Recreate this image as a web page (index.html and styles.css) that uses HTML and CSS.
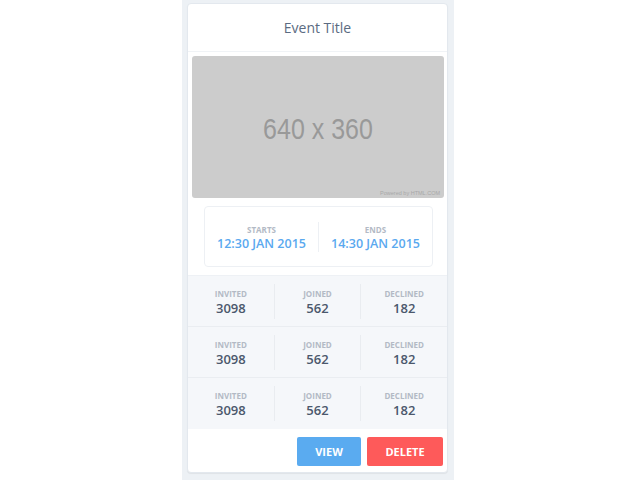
FILE: index.html
```html
<!DOCTYPE html>
<html>
<head>
<meta charset="utf-8">
<link rel="stylesheet" href="styles.css">
</head>
<body>
<div class="column">
  <div class="card">
    <div class="card-header">Event Title</div>
    <div class="media">
      <div class="placeholder">
        <span class="ph-text">640 x 360</span>
        <span class="ph-credit">Powered by HTML.COM</span>
      </div>
    </div>
    <div class="dates-wrap">
      <div class="dates">
        <div class="date">
          <div class="date-label">STARTS</div>
          <div class="date-value">12:30 JAN 2015</div>
        </div>
        <div class="date">
          <div class="date-label">ENDS</div>
          <div class="date-value">14:30 JAN 2015</div>
        </div>
      </div>
    </div>
    <div class="stats">
      <div class="stat-row">
        <div class="stat"><div class="stat-label">INVITED</div><div class="stat-value">3098</div></div>
        <div class="stat"><div class="stat-label">JOINED</div><div class="stat-value">562</div></div>
        <div class="stat"><div class="stat-label">DECLINED</div><div class="stat-value">182</div></div>
      </div>
      <div class="stat-row">
        <div class="stat"><div class="stat-label">INVITED</div><div class="stat-value">3098</div></div>
        <div class="stat"><div class="stat-label">JOINED</div><div class="stat-value">562</div></div>
        <div class="stat"><div class="stat-label">DECLINED</div><div class="stat-value">182</div></div>
      </div>
      <div class="stat-row">
        <div class="stat"><div class="stat-label">INVITED</div><div class="stat-value">3098</div></div>
        <div class="stat"><div class="stat-label">JOINED</div><div class="stat-value">562</div></div>
        <div class="stat"><div class="stat-label">DECLINED</div><div class="stat-value">182</div></div>
      </div>
    </div>
    <div class="card-footer">
      <button class="btn btn-view">VIEW</button>
      <button class="btn btn-delete">DELETE</button>
    </div>
  </div>
</div>
</body>
</html>
```
FILE: styles.css
```css
html, body {
  margin: 0;
  padding: 0;
  background: #ffffff;
  height: 100%;
}
body {
  font-family: "Open Sans", "Liberation Sans", sans-serif;
}
.column {
  width: 272px;
  margin-left: 182px;
  min-height: 480px;
  background: #edf1f5;
  padding: 3px 6px 0 5px;
  box-sizing: border-box;
}
.card {
  background: #ffffff;
  border-radius: 4px;
  border: 1px solid #e3e8ee;
  box-shadow: 0 1px 1px rgba(0, 0, 0, 0.06);
  overflow: hidden;
}
.card-header {
  height: 47px;
  display: flex;
  align-items: center;
  justify-content: center;
  font-size: 14px;
  color: #5b6b82;
  border-bottom: 1px solid #f0f3f6;
}
.media {
  padding: 4px 3px 0 4px;
}
.placeholder {
  position: relative;
  height: 142px;
  background: #cccccc;
  border-radius: 3px;
  display: flex;
  align-items: center;
  justify-content: center;
}
.ph-text {
  font-family: "Liberation Sans", Arial, sans-serif;
  font-size: 25px;
  color: #999999;
  transform: translateY(2px) scaleY(1.15);
}
.ph-credit {
  position: absolute;
  right: 4px;
  bottom: 2px;
  font-family: "Liberation Sans", Arial, sans-serif;
  font-size: 5.5px;
  color: #a8a8a8;
}
.dates-wrap {
  padding: 8px 14px 8px 16px;
  border-bottom: 1px solid #eef1f5;
}
.dates {
  display: flex;
  border: 1px solid #edf0f4;
  border-radius: 4px;
  height: 59px;
  align-items: center;
}
.date {
  flex: 1;
  text-align: center;
  padding-top: 2px;
}
.date + .date {
  border-left: 1px solid #edf0f4;
}
.date-label {
  font-size: 8px;
  font-weight: 700;
  color: #b3bac5;
  line-height: 11px;
}
.date-value {
  font-size: 12.5px;
  font-weight: 600;
  color: #5aa9ef;
  line-height: 17px;
}
.stats {
  background: #f5f7fa;
}
.stat-row {
  display: flex;
  height: 50px;
  align-items: center;
  border-bottom: 1px solid #eaedf1;
}
.stat-row:last-child {
  border-bottom: none;
  height: 51px;
}
.stat {
  flex: 1;
  text-align: center;
  padding: 4px 0 2px;
}
.stat + .stat {
  border-left: 1px solid #e9ecf0;
}
.stat-label {
  font-size: 8px;
  font-weight: 700;
  color: #b3bac5;
  line-height: 11px;
}
.stat-value {
  font-size: 13px;
  font-weight: 600;
  color: #4b586c;
  line-height: 18px;
}
.card-footer {
  display: flex;
  justify-content: flex-end;
  gap: 6px;
  padding: 8px 4px 6px 0;
}
.btn {
  border: none;
  border-radius: 2px;
  height: 29px;
  font-family: "Open Sans", "Liberation Sans", sans-serif;
  font-size: 11px;
  font-weight: 700;
  color: #ffffff;
  padding: 0;
}
.btn-view {
  width: 64px;
  background: #5aabf0;
}
.btn-delete {
  width: 76px;
  background: #fe5a5a;
}
```
